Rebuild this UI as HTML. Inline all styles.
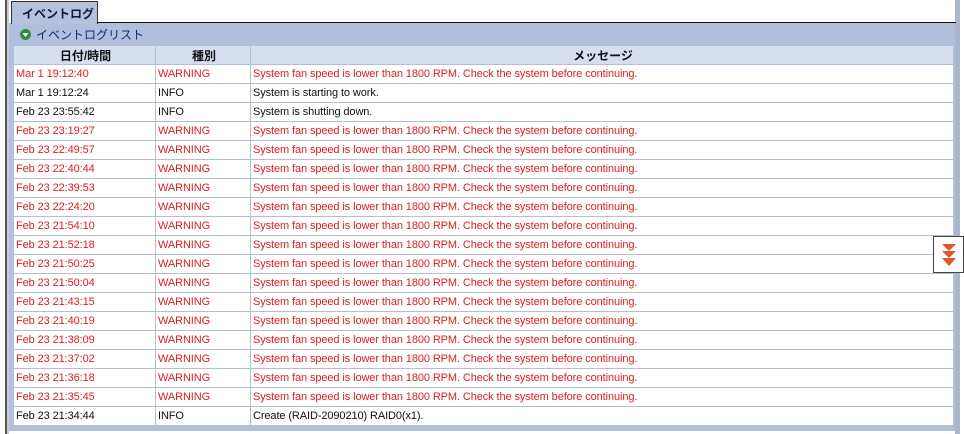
<!DOCTYPE html>
<html><head><style>
body{margin:0;width:964px;height:434px;background:#fff;position:relative;overflow:hidden;font-family:"Liberation Sans","Noto Sans CJK JP",sans-serif;}
.lb{position:absolute;left:5px;top:0;width:2px;height:434px;background:#555;}
.lb2{position:absolute;left:7px;top:0;width:2px;height:434px;background:#c8cbd0;}
.tab{position:absolute;left:11px;top:1px;width:87px;height:23px;background:#b4c3dd;border-left:1px solid #333;border-top:1px solid #333;border-right:1px solid #333;box-sizing:border-box;font-size:12px;font-weight:bold;color:#0a1a40;padding:3px 0 0 10px;white-space:nowrap;}
.tline{position:absolute;left:97px;top:22px;width:859px;height:1px;background:#111;}
.panel{position:absolute;left:9px;top:23px;width:947px;height:408px;background:#b0c0dc;}
.rb{position:absolute;left:955px;top:0;width:5px;height:434px;background:#a9b6cc;}
.title{position:absolute;left:20px;top:26px;font-size:12px;color:#0c2a78;white-space:nowrap;}
.title svg{vertical-align:-1px;margin-right:5px}
table{position:absolute;left:13px;top:45px;width:941px;border-collapse:collapse;font-size:11px;letter-spacing:-0.1px;}
td,th{height:18px;padding:0 0 0 2px;border:1px solid #b6c0cc;white-space:nowrap;}
th{background:#d7deee;font-weight:bold;font-size:12px;text-align:center;color:#111;border-color:#b0c0dc;letter-spacing:0;}
td{background:#fff;color:#111;}
tr.w td{color:#d6231e;}
.btn{position:absolute;left:933px;top:236px;width:31px;height:37px;background:#fff;border:1px solid #444;box-sizing:border-box;}
</style></head><body>
<div class="lb"></div><div class="lb2"></div>
<div class="panel"></div>
<div class="rb"></div>
<div class="tab">イベントログ</div>
<div class="tline"></div>
<div class="title"><svg width="11" height="11" viewBox="0 0 11 11"><circle cx="5.5" cy="5.5" r="5.5" fill="#2e8b3e"/><path d="M2.5 4h6l-3 4z" fill="#fff"/></svg>イベントログリスト</div>
<table>
<tr><th style="width:139px">日付/時間</th><th style="width:92px">種別</th><th>メッセージ</th></tr>
<tr class="w"><td>Mar 1 19:12:40</td><td>WARNING</td><td>System fan speed is lower than 1800 RPM. Check the system before continuing.</td></tr>
<tr><td>Mar 1 19:12:24</td><td>INFO</td><td>System is starting to work.</td></tr>
<tr><td>Feb 23 23:55:42</td><td>INFO</td><td>System is shutting down.</td></tr>
<tr class="w"><td>Feb 23 23:19:27</td><td>WARNING</td><td>System fan speed is lower than 1800 RPM. Check the system before continuing.</td></tr>
<tr class="w"><td>Feb 23 22:49:57</td><td>WARNING</td><td>System fan speed is lower than 1800 RPM. Check the system before continuing.</td></tr>
<tr class="w"><td>Feb 23 22:40:44</td><td>WARNING</td><td>System fan speed is lower than 1800 RPM. Check the system before continuing.</td></tr>
<tr class="w"><td>Feb 23 22:39:53</td><td>WARNING</td><td>System fan speed is lower than 1800 RPM. Check the system before continuing.</td></tr>
<tr class="w"><td>Feb 23 22:24:20</td><td>WARNING</td><td>System fan speed is lower than 1800 RPM. Check the system before continuing.</td></tr>
<tr class="w"><td>Feb 23 21:54:10</td><td>WARNING</td><td>System fan speed is lower than 1800 RPM. Check the system before continuing.</td></tr>
<tr class="w"><td>Feb 23 21:52:18</td><td>WARNING</td><td>System fan speed is lower than 1800 RPM. Check the system before continuing.</td></tr>
<tr class="w"><td>Feb 23 21:50:25</td><td>WARNING</td><td>System fan speed is lower than 1800 RPM. Check the system before continuing.</td></tr>
<tr class="w"><td>Feb 23 21:50:04</td><td>WARNING</td><td>System fan speed is lower than 1800 RPM. Check the system before continuing.</td></tr>
<tr class="w"><td>Feb 23 21:43:15</td><td>WARNING</td><td>System fan speed is lower than 1800 RPM. Check the system before continuing.</td></tr>
<tr class="w"><td>Feb 23 21:40:19</td><td>WARNING</td><td>System fan speed is lower than 1800 RPM. Check the system before continuing.</td></tr>
<tr class="w"><td>Feb 23 21:38:09</td><td>WARNING</td><td>System fan speed is lower than 1800 RPM. Check the system before continuing.</td></tr>
<tr class="w"><td>Feb 23 21:37:02</td><td>WARNING</td><td>System fan speed is lower than 1800 RPM. Check the system before continuing.</td></tr>
<tr class="w"><td>Feb 23 21:36:18</td><td>WARNING</td><td>System fan speed is lower than 1800 RPM. Check the system before continuing.</td></tr>
<tr class="w"><td>Feb 23 21:35:45</td><td>WARNING</td><td>System fan speed is lower than 1800 RPM. Check the system before continuing.</td></tr>
<tr><td>Feb 23 21:34:44</td><td>INFO</td><td>Create (RAID-2090210) RAID0(x1).</td></tr>
</table>
<div class="btn"><svg width="31" height="37" viewBox="0 0 31 37"><path d="M8 7h14l-7 7z M8 14h14l-7 7z M8 21h14l-7 8z" fill="#e0562a"/></svg></div>
</body></html>
